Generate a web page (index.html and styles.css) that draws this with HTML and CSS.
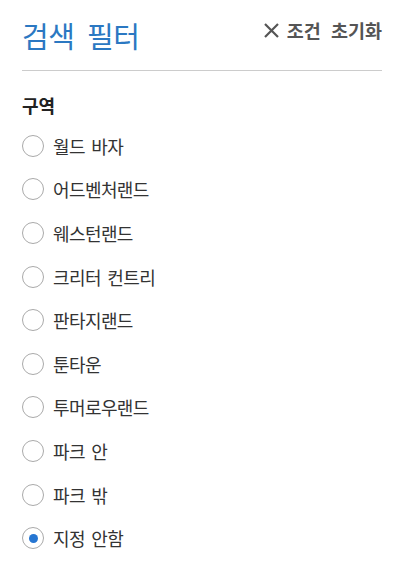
FILE: index.html
```html
<!DOCTYPE html>
<html lang="ko">
<head>
  <meta charset="UTF-8" />
  <meta name="viewport" content="width=device-width, initial-scale=1.0"/>
  <title>검색 필터</title>
  <link rel="stylesheet" href="styles.css">
</head>
<body>
  <div class="panel">
    <div class="header">
      <h1>검색 필터</h1>
      <button class="reset">
        <svg width="17" height="17" viewBox="0 0 17 17"><path d="M2 2 L15 15 M15 2 L2 15" stroke="#555" stroke-width="2.2" fill="none"/></svg>
        조건 초기화
      </button>
    </div>

    <h2>구역</h2>
    <ul class="options">
      <li><span class="radio"></span>월드 바자</li>
      <li><span class="radio"></span>어드벤처랜드</li>
      <li><span class="radio"></span>웨스턴랜드</li>
      <li><span class="radio"></span>크리터 컨트리</li>
      <li><span class="radio"></span>판타지랜드</li>
      <li><span class="radio"></span>툰타운</li>
      <li><span class="radio"></span>투머로우랜드</li>
      <li><span class="radio"></span>파크 안</li>
      <li><span class="radio"></span>파크 밖</li>
      <li><span class="radio checked"></span>지정 안함</li>
    </ul>
  </div>
</body>
</html>
```

FILE: styles.css
```css
body {
  margin: 0;
  background: #fff;
  font-family: "Noto Sans CJK KR", "Noto Sans", sans-serif;
  color: #333;
}

.panel {
  width: 360px;
  margin-left: 22px;
}

.header {
  height: 70px;
  display: flex;
  align-items: center;
  justify-content: space-between;
  border-bottom: 1px solid #ccc;
}

h1 {
  margin: 0;
  font-size: 29px;
  font-weight: normal;
  color: #2b78c2;
  line-height: 36px;
  letter-spacing: -0.5px;
  word-spacing: 5px;
}

.reset {
  display: flex;
  align-items: center;
  gap: 7px;
  background: none;
  border: none;
  padding: 0;
  font-family: inherit;
  font-size: 18.5px;
  font-weight: bold;
  color: #555;
  letter-spacing: 0;
  word-spacing: 5px;
  margin-top: -10px;
}

h2 {
  margin: 22px 0 7px;
  font-size: 18px;
  font-weight: bold;
  line-height: 24px;
  color: #222;
}

.options {
  list-style: none;
  margin: 0;
  padding: 0;
}

.options li {
  height: 43.6px;
  display: flex;
  align-items: center;
  gap: 9px;
  font-size: 18px;
  letter-spacing: -0.6px;
  word-spacing: 2px;
  color: #333;
}

.radio {
  width: 20px;
  height: 20px;
  border: 1px solid #aaa;
  border-radius: 50%;
  display: flex;
  align-items: center;
  justify-content: center;
}

.radio.checked::after {
  content: "";
  width: 9px;
  height: 9px;
  border-radius: 50%;
  background: #2676d2;
}
```
